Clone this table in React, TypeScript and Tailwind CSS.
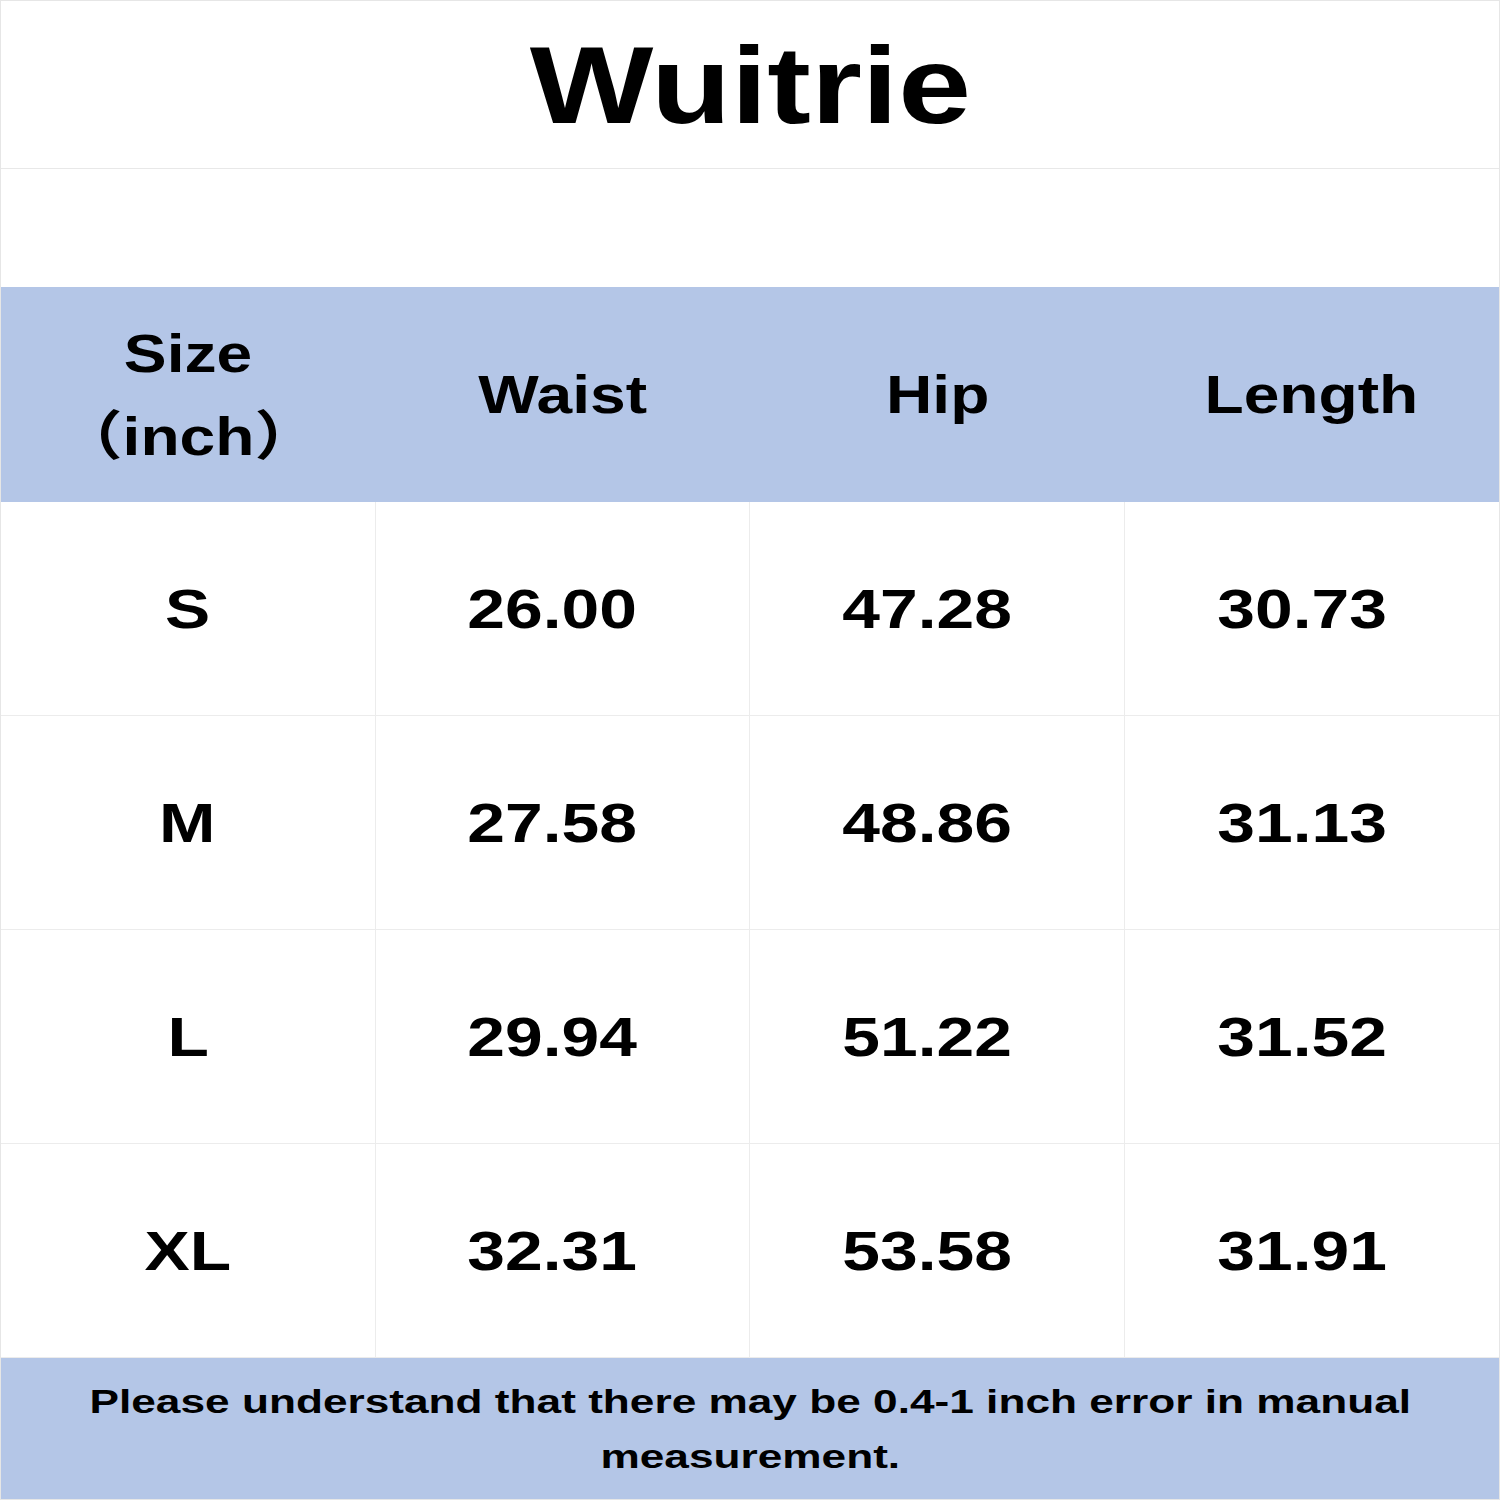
import React from 'react';

const rows = [
  ['S', '26.00', '47.28', '30.73'],
  ['M', '27.58', '48.86', '31.13'],
  ['L', '29.94', '51.22', '31.52'],
  ['XL', '32.31', '53.58', '31.91'],
];

const font = { fontFamily: '"Liberation Sans", "Noto Sans CJK SC", Arial, sans-serif' };

const Wide = ({ children, className = '' }: { children: React.ReactNode; className?: string }) => (
  <span className={`inline-block font-bold text-black ${className}`}>{children}</span>
);

const App = () => {
  return (
    <div style={font} className="w-[1500px] h-[1500px] bg-white border border-[#e6e6e6] flex flex-col">
      <div className="h-[168px] border-b border-[#e8e8e8] flex items-center justify-center">
        <Wide className="text-[110px] leading-none scale-x-[1.19]">Wuitrie</Wide>
      </div>
      <div className="h-[118px]" />

      <div className="h-[215px] bg-[#b4c6e7] grid grid-cols-4">
        <div className="flex flex-col items-center justify-center">
          <Wide className="text-[53px] leading-[83px] scale-x-[1.21]">Size</Wide>
          <Wide className="text-[53px] leading-[83px] scale-x-[1.21]">（inch）</Wide>
        </div>
        {['Waist', 'Hip', 'Length'].map((h) => (
          <div key={h} className="flex items-center justify-center">
            <Wide className="text-[53px] leading-none scale-x-[1.21]">{h}</Wide>
          </div>
        ))}
      </div>

      {rows.map((row) => (
        <div key={row[0]} className="h-[214px] border-b border-[#ececec] grid grid-cols-4">
          {row.map((cell, i) => (
            <div
              key={i}
              className={`flex items-center justify-center ${i < 3 ? 'border-r border-[#ececec]' : ''}`}
            >
              <Wide
                className={`text-[56px] leading-none scale-x-[1.21] ${i > 0 ? '-translate-x-[10px]' : ''}`}
              >
                {cell}
              </Wide>
            </div>
          ))}
        </div>
      ))}

      <div className="flex-1 bg-[#b4c6e7] flex flex-col items-center justify-center">
        <Wide className="text-[34px] leading-[55px] scale-x-[1.3]">
          Please understand that there may be 0.4-1 inch error in manual
        </Wide>
        <Wide className="text-[34px] leading-[55px] scale-x-[1.3]">measurement.</Wide>
      </div>
    </div>
  );
};

export default App;
